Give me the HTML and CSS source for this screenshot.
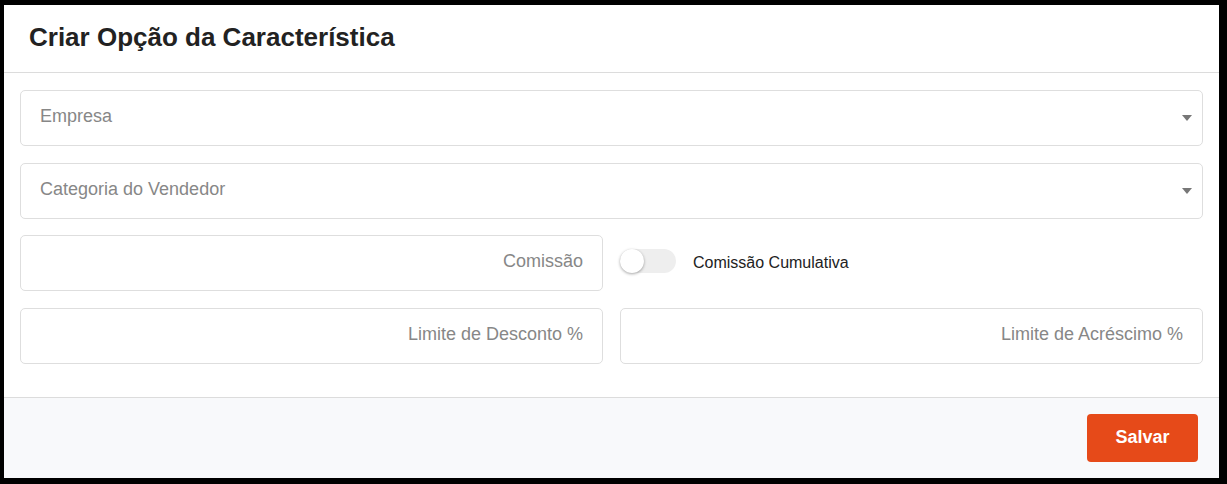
FILE: index.html
```html
<!DOCTYPE html>
<html lang="pt">
<head>
<meta charset="utf-8">
<link rel="stylesheet" href="styles.css">
</head>
<body>
<div class="modal">
  <div class="modal-header">
    <h1 class="title">Criar Opção da Característica</h1>
  </div>
  <div class="modal-body">
    <div class="field select">
      <span class="placeholder">Empresa</span>
      <span class="caret"></span>
    </div>
    <div class="field select">
      <span class="placeholder">Categoria do Vendedor</span>
      <span class="caret"></span>
    </div>
    <div class="row">
      <div class="field right"><span class="placeholder">Comissão</span></div>
      <div class="toggle-wrap">
        <span class="toggle"><span class="knob"></span></span>
        <span class="toggle-label">Comissão Cumulativa</span>
      </div>
    </div>
    <div class="row">
      <div class="field right"><span class="placeholder">Limite de Desconto %</span></div>
      <div class="field right"><span class="placeholder">Limite de Acréscimo %</span></div>
    </div>
  </div>
  <div class="modal-footer">
    <button class="btn">Salvar</button>
  </div>
</div>
</body>
</html>
```
FILE: styles.css
```css
html, body {
  margin: 0;
  padding: 0;
  background: #000;
  font-family: "Liberation Sans", Arial, sans-serif;
}
.modal {
  margin: 5px 0 0 4px;
  width: 1215px;
  height: 473px;
  background: #fff;
  display: flex;
  flex-direction: column;
}
.modal-header {
  border-bottom: 1px solid #dcdcdc;
  display: flex;
  align-items: center;
  padding-left: 25px;
  box-sizing: border-box;
  height: 68px;
}
.title {
  margin: 0;
  font-size: 26px;
  font-weight: bold;
  color: #222;
  padding-bottom: 3px;
}
.modal-body {
  padding: 17px 16px 33px 16px;
  display: flex;
  flex-direction: column;
  gap: 16.5px;
}
.field {
  height: 56px;
  box-sizing: border-box;
  border: 1px solid #dedede;
  border-radius: 5px;
  display: flex;
  align-items: center;
  padding: 0 20px 3px 19px;
  position: relative;
  font-size: 18px;
}
.placeholder {
  color: #878787;
}
.field.right {
  justify-content: flex-end;
  flex: 0 0 583px;
  padding-right: 19px;
}
.caret {
  position: absolute;
  right: 10px;
  top: 24px;
  width: 0;
  height: 0;
  border-left: 5px solid transparent;
  border-right: 5px solid transparent;
  border-top: 6px solid #777;
}
.row {
  display: flex;
  gap: 17px;
}
.toggle-wrap {
  display: flex;
  align-items: center;
  height: 56px;
  margin-top: -2px;
}
.toggle {
  width: 56px;
  height: 24px;
  border-radius: 12px;
  background: #eeeeee;
  position: relative;
  display: inline-block;
}
.knob {
  position: absolute;
  left: 0;
  top: 0;
  width: 24px;
  height: 24px;
  border-radius: 50%;
  background: #fff;
  box-shadow: 0 1px 3px rgba(0,0,0,0.35);
}
.toggle-label {
  margin-left: 17px;
  font-size: 16px;
  color: #222;
  padding-top: 3px;
}
.modal-footer {
  flex: 1;
  border-top: 1px solid #dcdcdc;
  background: #f8f9fb;
  display: flex;
  justify-content: flex-end;
  align-items: flex-start;
  padding: 16px 21px 0 0;
}
.btn {
  width: 111px;
  height: 48px;
  border: 0;
  border-radius: 4px;
  background: #e64a19;
  color: #fff;
  font-family: "Liberation Sans", Arial, sans-serif;
  font-size: 18px;
  font-weight: bold;
}
```
